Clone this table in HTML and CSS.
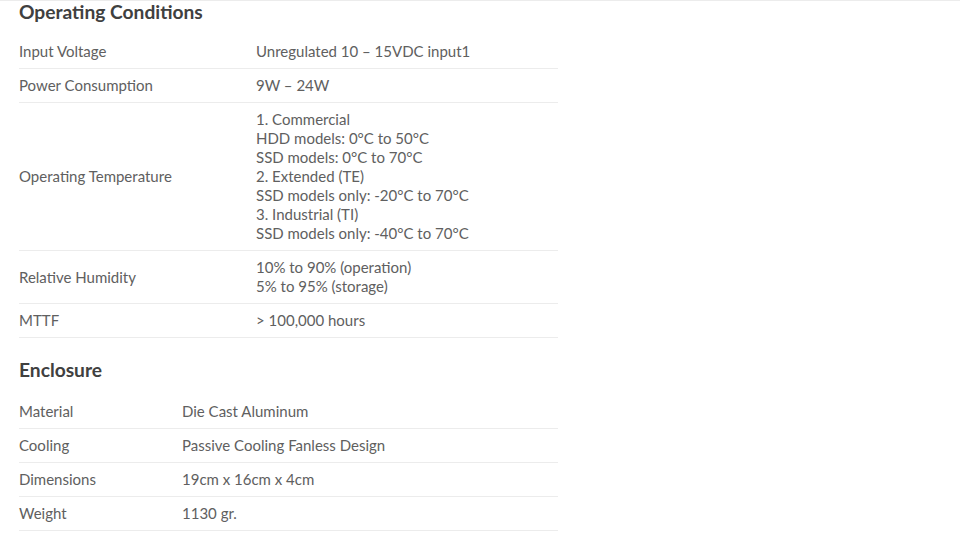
FILE: index.html
```html
<!DOCTYPE html>
<html>
<head>
<meta charset="utf-8">
<link rel="stylesheet" href="styles.css">
</head>
<body>
<div class="page">
  <section class="spec">
    <h2 class="spec-title">Operating Conditions</h2>
    <table class="spec-table wide">
      <tr><td class="label">Input Voltage</td><td>Unregulated 10 – 15VDC input1</td></tr>
      <tr><td class="label">Power Consumption</td><td>9W – 24W</td></tr>
      <tr><td class="label">Operating Temperature</td><td>1. Commercial<br>HDD models: 0°C to 50°C<br>SSD models: 0°C to 70°C<br>2. Extended (TE)<br>SSD models only: -20°C to 70°C<br>3. Industrial (TI)<br>SSD models only: -40°C to 70°C</td></tr>
      <tr><td class="label">Relative Humidity</td><td>10% to 90% (operation)<br>5% to 95% (storage)</td></tr>
      <tr><td class="label">MTTF</td><td>&gt; 100,000 hours</td></tr>
    </table>
  </section>
  <section class="spec">
    <h2 class="spec-title">Enclosure</h2>
    <table class="spec-table narrow">
      <tr><td class="label">Material</td><td>Die Cast Aluminum</td></tr>
      <tr><td class="label">Cooling</td><td>Passive Cooling Fanless Design</td></tr>
      <tr><td class="label">Dimensions</td><td>19cm x 16cm x 4cm</td></tr>
      <tr><td class="label">Weight</td><td>1130 gr.</td></tr>
    </table>
  </section>
</div>
</body>
</html>
```
FILE: styles.css
```css
html, body {
  margin: 0;
  padding: 0;
  background: #fff;
}
body {
  font-family: Lato, "Open Sans", sans-serif;
  color: #606060;
  border-top: 1px solid #ececec;
}
.page {
  padding: 0 19px;
  width: 539px;
}
.spec-title {
  margin: 0;
  font-size: 19.2px;
  font-weight: 700;
  color: #404040;
  line-height: 22px;
}
.spec:first-child .spec-title {
  margin-top: 0;
  padding-bottom: 12px;
}
.spec + .spec .spec-title {
  margin-top: 21px;
  padding-bottom: 14px;
}
.spec-table {
  width: 100%;
  border-collapse: collapse;
  font-size: 15px;
  line-height: 19px;
}
.spec-table td {
  padding: 7px 0;
  border-bottom: 1px solid #ececec;
  vertical-align: middle;
}
.wide .label { width: 237px; }
.narrow .label { width: 163px; }
```
